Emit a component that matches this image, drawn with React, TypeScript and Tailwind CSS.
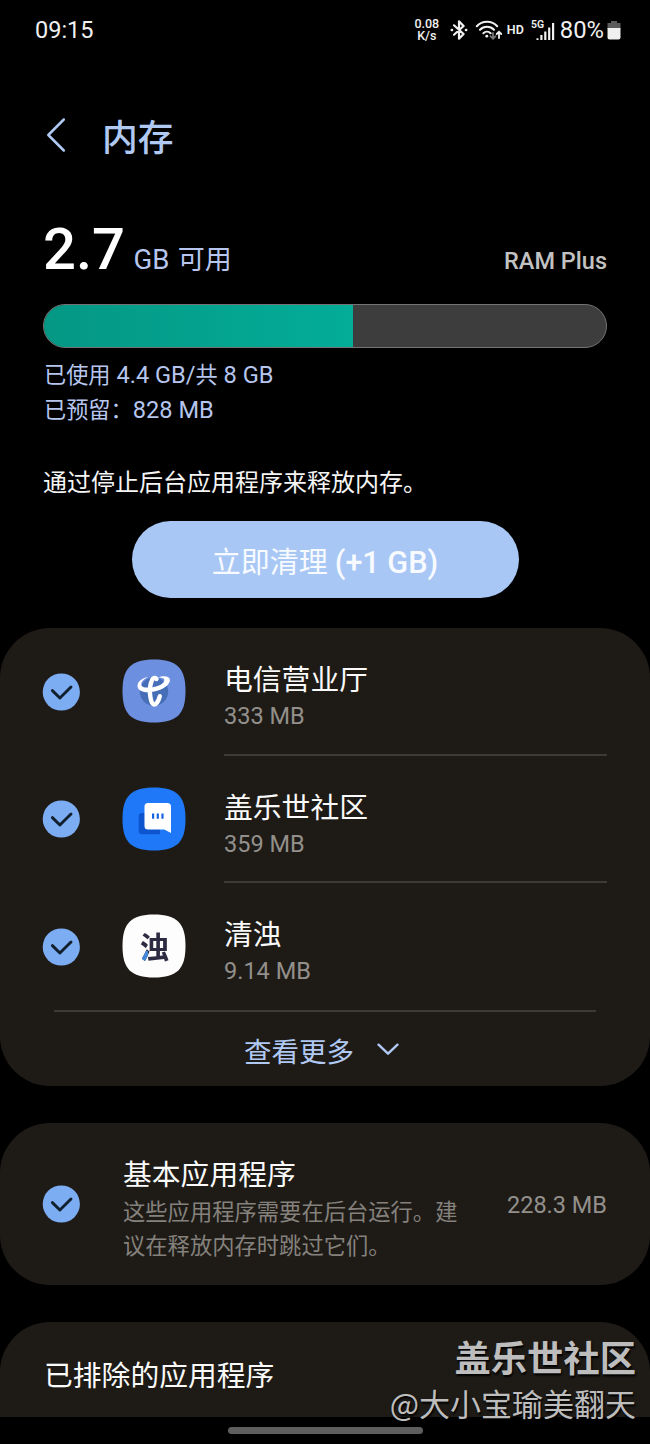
import type { ReactNode } from "react";

const SQUIRCLE = "M32 0.5C55 0.5 63.5 9 63.5 32S55 63.5 32 63.5S0.5 55 0.5 32S9 0.5 32 0.5Z";

function Check() {
  return (
    <svg className="h-[38px] w-[38px] shrink-0" viewBox="0 0 38 38" fill="none">
      <circle cx="19.3" cy="19" r="18.6" fill="#7cadf2" />
      <path d="M10.4 17.6L17.9 25L29 14" stroke="#12202e" strokeWidth="2.9" strokeLinecap="round" strokeLinejoin="round" />
    </svg>
  );
}

function TelecomIcon() {
  return (
    <svg className="h-16 w-16" viewBox="0 0 64 64" fill="none">
      <path d={SQUIRCLE} fill="#6d8fe0" />
      <circle cx="32" cy="32.6" r="14.2" fill="#476fb8" />
      <path
        d="M26.5 17.8C18.5 19.5 14.5 24 15.7 28.3C17.3 33.8 27 34.5 36 31.5C44 28.8 49 23.5 47.7 19.9C46.6 16.7 40.5 16.5 36 18.6C40 18.5 42.6 19.4 42.3 21.4C41.9 24.4 36.8 27.2 30.5 28.2C24.3 29.2 19.4 28.4 19.3 25.4C19.2 22.6 22.3 19.8 26.5 17.8Z"
        fill="#fff"
      />
      <path d="M34.5 20C33.4 18.2 31.3 18.6 30.2 20.8C28.2 25 27.4 31.5 28.3 37.5C29 42.5 30.3 45.6 32 45.6C34.3 45.6 36.6 41.8 37.8 37.2" stroke="#fff" strokeWidth="4.4" strokeLinecap="round" strokeLinejoin="round" />
    </svg>
  );
}

function CommunityIcon() {
  return (
    <svg className="h-16 w-16" viewBox="0 0 64 64" fill="none">
      <path d={SQUIRCLE} fill="#1f78f8" />
      <path d="M20 26H38V47.3H20Q16.7 47.3 16.7 44V29.3Q16.7 26 20 26Z" fill="#0c55cf" />
      <path d="M26 16H45.3Q49 16 49 19.6V46L42.3 42.5H26Q22.5 42.5 22.5 39V19.6Q22.5 16 26 16Z" fill="#fff" />
      <path d="M31.1 26.4V31.8M35.8 26.4V31.8M40.5 26.4V31.8" stroke="#1763df" strokeWidth="2.2" />
    </svg>
  );
}

function ZhuoIcon() {
  return (
    <div className="grid h-16 w-16">
      <svg className="col-start-1 row-start-1 h-16 w-16" viewBox="0 0 64 64">
        <path d={SQUIRCLE} fill="#fdfdfd" />
      </svg>
      <span className="col-start-1 row-start-1 mt-[3px] h-[32px] w-[30px] place-self-center text-center text-[29.5px] leading-[32px] font-bold text-transparent [background-clip:text] [background-image:linear-gradient(#4288dc,#4288dc),linear-gradient(#2d2b42,#2d2b42)] [background-position:0_100%,0_0] [background-repeat:no-repeat] [background-size:9px_13px,100%_100%]">
        浊
      </span>
    </div>
  );
}

function AppRow({ icon, name, size, last }: { icon: ReactNode; name: string; size: string; last?: boolean }) {
  return (
    <div className={last ? "flex h-[128px] pr-[43px] pl-[42px]" : "flex h-[127.5px] pr-[43px] pl-[42px]"}>
      <div className="pt-[44.6px]"><Check /></div>
      <div className="ml-[42.4px] w-[101.6px] pt-[31px]">{icon}</div>
      <div className={last ? "flex-1 pt-[33px]" : "flex-1 border-b-2 border-[#3c3a35] pt-[33px]"}>
        <div className="text-[28.8px] leading-[38px] text-[#fafafa]">{name}</div>
        <div className="text-[23.5px] leading-[34px] text-[#93908b]">{size}</div>
      </div>
    </div>
  );
}

function StatusBar() {
  return (
    <header className="flex h-[60px] items-center pr-[29px] pl-[35px] text-[#f0f0f0]">
      <span className="pt-[2px] text-[23.5px] leading-none">09:15</span>
      <div className="ml-auto flex items-center">
        <div className="w-[26px] text-center text-[12.5px] leading-[12px] font-medium">
          <div>0.08</div>
          <div>K/s</div>
        </div>
        <svg className="ml-[10px] h-[20px] w-[18px]" viewBox="0 0 18 20" fill="none" stroke="#f0f0f0" strokeWidth="2.2" strokeLinejoin="round" strokeLinecap="round">
          <path d="M4 5.3L13.6 14L9 18.6V1.4L13.6 6L4 14.7" />
          <path d="M1.8 10H2M16 10H16.2" strokeWidth="2.6" />
        </svg>
        <svg className="ml-[7px] h-[21px] w-[28px]" viewBox="0 0 28 21" fill="none" stroke="#f0f0f0" strokeWidth="2.1" strokeLinecap="round">
          <path d="M1.8 6.2C7.2 0.3 16.8 0.3 22.2 6.2" />
          <path d="M5 9.8C8.8 5.8 15.2 5.8 19 9.8" />
          <path d="M8.4 13.2C10.5 11.2 13.5 11.2 15.6 13.2" />
          <circle cx="11.8" cy="16.2" r="1.4" fill="#f0f0f0" stroke="none" />
          <path d="M18 13V18.6M15.4 16.2L18 18.8L20.6 16.2" stroke="#777" strokeWidth="1.8" />
          <path d="M24 18V12M21.7 14L24 11.7L26.3 14" strokeWidth="1.8" />
        </svg>
        <span className="ml-[4px] text-[12.5px] leading-none font-semibold">HD</span>
        <svg className="ml-[7px] h-[22px] w-[24px]" viewBox="0 0 24 22" fill="#f0f0f0">
          <text x="0" y="8.8" fontSize="10.5" fontWeight="600">5G</text>
          <path d="M5.5 19.2H7.5V21H5.5ZM9.3 16H11.5V21H9.3ZM13.2 12.5H15.4V21H13.2ZM17.1 8.5H19.3V21H17.1ZM21 4H23.2V21H21Z" />
        </svg>
        <span className="ml-[5px] text-[23.8px] leading-[24px]">80%</span>
        <svg className="ml-[3px] h-[20px] w-[14px]" viewBox="0 0 14 20">
          <path d="M4 1H10V3H13.5V9H0.5V3H4Z" fill="#5c5c5c" />
          <path d="M0.5 8H13.5V17.5Q13.5 19.5 11.5 19.5H2.5Q0.5 19.5 0.5 17.5Z" fill="#f0f0f0" />
        </svg>
      </div>
    </header>
  );
}

export default function App() {
  return (
    <div className="relative h-[1444px] w-[650px] overflow-hidden bg-black font-[Roboto,'Noto_Sans_CJK_SC',sans-serif] text-white">
      <StatusBar />

      <div className="flex h-[150px] items-center pl-[46px] text-[#b0c9f3]">
        <svg className="h-[36px] w-[20px]" viewBox="0 0 20 36" fill="none" stroke="currentColor" strokeWidth="2.5" strokeLinecap="round" strokeLinejoin="round">
          <path d="M17.8 2.5L2.3 18L17.8 33.5" />
        </svg>
        <h1 className="ml-[36px] pt-[8px] text-[35.8px] leading-[44px] font-medium">内存</h1>
      </div>

      <section className="px-[43px]">
        <div className="flex h-[94px] items-baseline pt-[4px]">
          <span className="text-[58px] leading-[70px] font-medium">2.7</span>
          <span className="ml-[8.5px] text-[27.5px] text-[#b6c6ee]">GB <span className="ml-[1.5px] text-[27px]">可用</span></span>
          <span className="ml-auto text-[23.5px] font-medium text-[#c2c2c2]">RAM Plus</span>
        </div>
        <div className="flex h-[44px] overflow-hidden rounded-full border border-[#737373] bg-[#3d3d3d]">
          <div className="w-[309px] bg-linear-to-r from-[#049784] to-[#03ad98]" />
        </div>
        <div className="mt-[10px] ml-px text-[23.6px] leading-[35px] text-[#b6c6ee]">
          <div><span className="text-[22.2px]">已使用</span> 4.4 GB/<span className="text-[22.2px]">共</span> 8 GB</div>
          <div><span className="text-[22.2px]">已预留：</span>828 MB</div>
        </div>
        <p className="mt-[38px] text-[24px] leading-[34px] text-[#f5f5f5]">通过停止后台应用程序来释放内存。</p>
      </section>

      <button className="mx-auto mt-[21px] flex h-[77px] w-[387px] items-baseline justify-center rounded-full bg-[#a9c7f5] pt-[21px] text-[29px] leading-[42px] text-[#f7fbff]">
        立即清理<span className="ml-[7px] text-[30.6px] font-medium">(+1 GB)</span>
      </button>

      <section className="mt-[30px] h-[458px] rounded-[50px] bg-[#1e1b17]">
        <AppRow icon={<TelecomIcon />} name="电信营业厅" size="333 MB" />
        <AppRow icon={<CommunityIcon />} name="盖乐世社区" size="359 MB" />
        <AppRow icon={<ZhuoIcon />} name="清浊" size="9.14 MB" last />
        <div className="mx-[54px] -mt-px h-[2px] bg-[#3c3a35]" />
        <div className="flex h-[76px] items-center pl-[244px] text-[27.5px] text-[#b0c9f3]">
          <span className="pt-[5px]">查看更多</span>
          <svg className="ml-[22px] h-[16px] w-[24px]" viewBox="0 0 24 16" fill="none" stroke="currentColor" strokeWidth="2.4" strokeLinecap="round" strokeLinejoin="round">
            <path d="M2.5 2.7L12 11.7L21.5 2.7" />
          </svg>
        </div>
      </section>

      <section className="mt-[37px] flex h-[162px] items-center rounded-[50px] bg-[#1e1b17] pr-[43px] pl-[42px]">
        <Check />
        <div className="ml-[43px] w-[340px] pt-[10px]">
          <div className="mb-px text-[28.8px] leading-[38px] text-[#fafafa]">基本应用程序</div>
          <p className="text-[22.3px] leading-[34px] text-[#85827d]">这些应用程序需要在后台运行。建议在释放内存时跳过它们。</p>
        </div>
        <span className="ml-auto pt-[4px] text-[23.5px] text-[#93908b]">228.3 MB</span>
      </section>

      <section className="mt-[37px] h-[95px] rounded-t-[50px] bg-[#1e1b17] pt-[35px] pl-[44px]">
        <div className="text-[28.8px] leading-[38px] text-[#fafafa]">已排除的应用程序</div>
      </section>
      <div className="mx-auto mt-[10px] h-[7px] w-[195px] rounded-full bg-[#5e5e5e]" />

      <div className="absolute right-[14px] bottom-[18px] text-right font-['Noto_Sans_CJK_SC',sans-serif] text-[#bdbdbd] [text-shadow:1px_2px_2px_#000]">
        <div className="text-[36.3px] leading-[48px] font-bold">盖乐世社区</div>
        <div className="text-[31px] leading-[46px]">@大小宝瑜美翻天</div>
      </div>
    </div>
  );
}
